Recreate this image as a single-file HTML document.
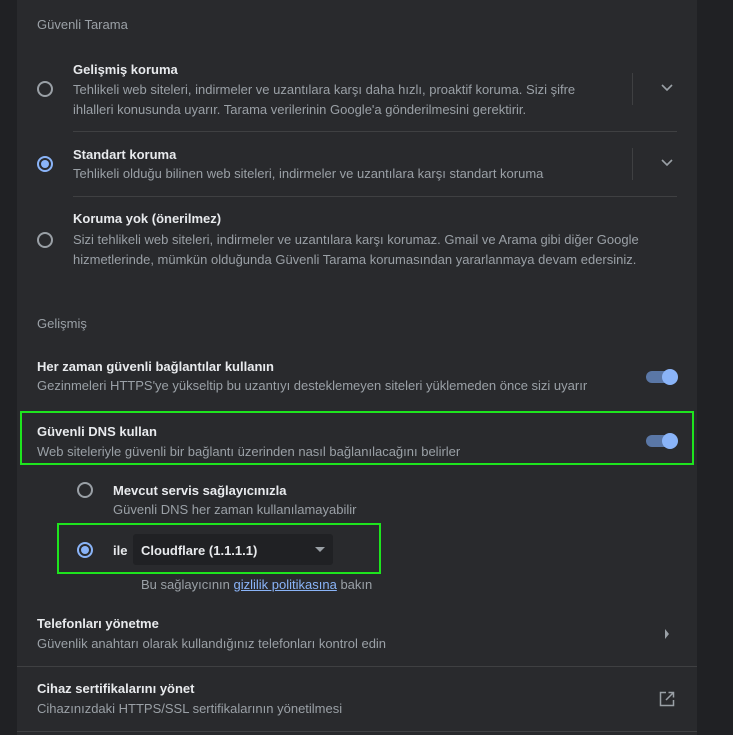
<!DOCTYPE html>
<html><head><meta charset="utf-8"><style>
body{margin:0;width:733px;height:735px;background:#202124;position:relative;overflow:hidden;font-family:"Liberation Sans",sans-serif;font-size:13px}
.card{position:absolute;left:17px;top:0;width:680px;height:735px;background:#292a2d}
.t{position:absolute;color:#e8eaed;font-weight:bold;white-space:nowrap;margin-top:1px}
.d{position:absolute;color:#9aa0a6;white-space:nowrap;line-height:19.5px;margin-top:1px}
.h{position:absolute;color:#9aa0a6;white-space:nowrap;margin-top:1px}
.r{position:absolute;width:12px;height:12px;border:2px solid #9aa0a6;border-radius:50%}
.r.on{border-color:#8ab4f8}
.r.on::after{content:"";position:absolute;left:2px;top:2px;width:8px;height:8px;border-radius:50%;background:#8ab4f8}
.hl{position:absolute;height:1px;background:#3f4042}
.vl{position:absolute;width:1px;background:#3f4042}
.tg{position:absolute;width:28px;height:12px;border-radius:6px;background:#5a77a6}
.tg::after{content:"";position:absolute;right:-4px;top:-2px;width:16px;height:16px;border-radius:50%;background:#8ab4f8}
.gb{position:absolute;border:2px solid #1ee41e}
svg{position:absolute}
</style></head><body>
<div class="card"></div>
<div class="h" style="left:37px;top:16px">Güvenli Tarama</div>

<div class="r" style="left:37px;top:81px"></div>
<div class="t" style="left:73px;top:61px">Gelişmiş koruma</div>
<div class="d" style="left:73px;top:79px">Tehlikeli web siteleri, indirmeler ve uzantılara karşı daha hızlı, proaktif koruma. Sizi şifre<br>ihlalleri konusunda uyarır. Tarama verilerinin Google'a gönderilmesini gerektirir.</div>
<div class="vl" style="left:632px;top:73px;height:32px"></div>
<svg style="left:660px;top:83px" width="14" height="10"><path d="M2 2l5 5 5-5" stroke="#9aa0a6" stroke-width="1.6" fill="none"/></svg>
<div class="hl" style="left:73px;top:131px;width:604px"></div>

<div class="r on" style="left:37px;top:156px"></div>
<div class="t" style="left:73px;top:146px">Standart koruma</div>
<div class="d" style="left:73px;top:163px">Tehlikeli olduğu bilinen web siteleri, indirmeler ve uzantılara karşı standart koruma</div>
<div class="vl" style="left:632px;top:148px;height:32px"></div>
<svg style="left:660px;top:158px" width="14" height="10"><path d="M2 2l5 5 5-5" stroke="#9aa0a6" stroke-width="1.6" fill="none"/></svg>
<div class="hl" style="left:73px;top:196px;width:604px"></div>

<div class="r" style="left:37px;top:232px"></div>
<div class="t" style="left:73px;top:210px">Koruma yok (önerilmez)</div>
<div class="d" style="left:73px;top:229px">Sizi tehlikeli web siteleri, indirmeler ve uzantılara karşı korumaz. Gmail ve Arama gibi diğer Google<br>hizmetlerinde, mümkün olduğunda Güvenli Tarama korumasından yararlanmaya devam edersiniz.</div>

<div class="h" style="left:37px;top:315px">Gelişmiş</div>

<div class="t" style="left:37px;top:358px">Her zaman güvenli bağlantılar kullanın</div>
<div class="d" style="left:37px;top:375px">Gezinmeleri HTTPS'ye yükseltip bu uzantıyı desteklemeyen siteleri yüklemeden önce sizi uyarır</div>
<div class="tg" style="left:646px;top:371px"></div>

<div class="gb" style="left:20px;top:411px;width:670px;height:50px"></div>
<div class="t" style="left:37px;top:423px">Güvenli DNS kullan</div>
<div class="d" style="left:37px;top:441px">Web siteleriyle güvenli bir bağlantı üzerinden nasıl bağlanılacağını belirler</div>
<div class="tg" style="left:646px;top:435px"></div>

<div class="r" style="left:77px;top:482px"></div>
<div class="t" style="left:113px;top:482px">Mevcut servis sağlayıcınızla</div>
<div class="d" style="left:113px;top:499px">Güvenli DNS her zaman kullanılamayabilir</div>

<div class="gb" style="left:57px;top:523px;width:320px;height:47px"></div>
<div class="r on" style="left:77px;top:542px"></div>
<div class="t" style="left:113px;top:542px">ile</div>
<div style="position:absolute;left:133px;top:534px;width:200px;height:31px;background:#202124;border-radius:3px"></div>
<div class="t" style="left:141px;top:542px">Cloudflare (1.1.1.1)</div>
<svg style="left:314px;top:546px" width="12" height="8"><path d="M1 1h10l-5 5z" fill="#9aa0a6"/></svg>
<div class="d" style="left:141px;top:574px">Bu sağlayıcının <span style="color:#8ab4f8;text-decoration:underline">gizlilik politikasına</span> bakın</div>

<div class="t" style="left:37px;top:615px">Telefonları yönetme</div>
<div class="d" style="left:37px;top:633px">Güvenlik anahtarı olarak kullandığınız telefonları kontrol edin</div>
<svg style="left:663px;top:628px" width="8" height="12"><path d="M2 1l4 5-4 5z" fill="#9aa0a6"/></svg>
<div class="hl" style="left:17px;top:666px;width:680px"></div>

<div class="t" style="left:37px;top:680px">Cihaz sertifikalarını yönet</div>
<div class="d" style="left:37px;top:698px">Cihazınızdaki HTTPS/SSL sertifikalarının yönetilmesi</div>
<svg style="left:659px;top:691px" width="16" height="16" viewBox="0 0 16 16"><path d="M7 1.5H1.5v13h13V9M9.5 1.5h5v5M14.5 1.5L7 9" stroke="#9aa0a6" stroke-width="1.5" fill="none"/></svg>
<div class="hl" style="left:17px;top:731px;width:680px"></div>
</body></html>
